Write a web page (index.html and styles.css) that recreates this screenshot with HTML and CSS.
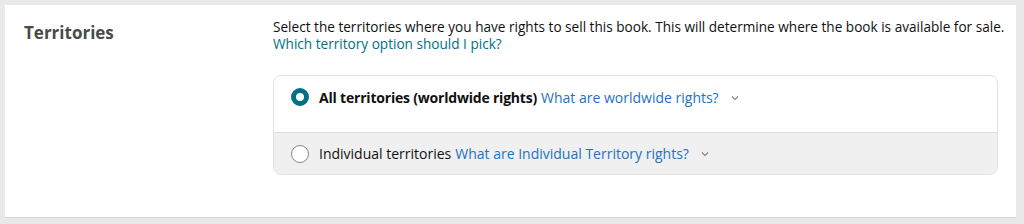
FILE: index.html
```html
<!DOCTYPE html>
<html lang="en">
<head>
    <meta charset="UTF-8">
    <title>Territories</title>
    <link rel="stylesheet" href="styles.css">
</head>
<body>

<div class="panel">
    <h2 class="panel-title">Territories</h2>

    <div class="panel-body">
        <p class="intro">
            Select the territories where you have rights to sell this book. This will determine where the book is available for sale.<br>
            <a href="#" class="help-link">Which territory option should I pick?</a>
        </p>

        <div class="options">
            <label class="option option-selected">
                <span class="radio radio-on"></span>
                <span class="option-label"><b>All territories (worldwide rights)</b></span>
                <a href="#" class="option-link">What are worldwide rights?</a>
                <svg class="chevron" width="8" height="6" viewBox="0 0 8 6"><path d="M1 1.5 L4 4.5 L7 1.5" fill="none" stroke="#888" stroke-width="1.2"/></svg>
            </label>
            <label class="option option-plain">
                <span class="radio"></span>
                <span class="option-label">Individual territories</span>
                <a href="#" class="option-link">What are Individual Territory rights?</a>
                <svg class="chevron" width="8" height="6" viewBox="0 0 8 6"><path d="M1 1.5 L4 4.5 L7 1.5" fill="none" stroke="#888" stroke-width="1.2"/></svg>
            </label>
        </div>
    </div>
</div>

</body>
</html>
```

FILE: styles.css
```css
/* page */
body {
    margin: 0;
    padding: 5px 8px 6px 5px;
    background-color: #e9e9e9;
    font-family: "Open Sans", "Noto Sans", Arial, sans-serif;
    color: #0f1111;
}
.panel {
    display: flex;
    background-color: #fff;
    border-bottom: 1px solid #d5d5d5;
    height: 213px;
    box-sizing: border-box;
}
.panel-title {
    width: 249px;
    margin: 0;
    padding: 16px 0 0 19px;
    font-size: 17px;
    font-weight: bold;
    color: #4a4a4a;
}
.panel-body {
    flex: 1;
    padding-top: 13px;
}
.intro {
    margin: 0;
    font-size: 13.6px;
    line-height: 17px;
    white-space: nowrap;
}
.help-link {
    color: #007185;
    text-decoration: none;
}

/* radio options */
.options {
    margin: 23px 18px 0 0;
    border: 1px solid #e3e3e3;
    border-radius: 8px;
    overflow: hidden;
}
.option {
    display: flex;
    align-items: center;
    gap: 4px;
    padding: 0 17px;
    font-size: 14px;
    cursor: pointer;
}
.option-selected {
    height: 57px;
    align-items: flex-start;
    padding-top: 12px;
    box-sizing: border-box;
    border-bottom: 1px solid #dcdcdc;
}
.option-plain {
    height: 41px;
    background-color: #f0f0f0;
}
.radio {
    width: 18px;
    height: 18px;
    margin-right: 6px;
    box-sizing: border-box;
    border: 1px solid #888;
    border-radius: 50%;
    background-color: #fff;
    flex-shrink: 0;
}
.radio-on {
    border: 5px solid #007185;
}
.option-label b {
    font-weight: bold;
    letter-spacing: -0.2px;
}
.option-link {
    color: #2272c3;
    text-decoration: none;
}
.chevron {
    margin-left: 8px;
    align-self: center;
}
.option-selected .chevron {
    align-self: flex-start;
    margin-top: 7px;
}
```
